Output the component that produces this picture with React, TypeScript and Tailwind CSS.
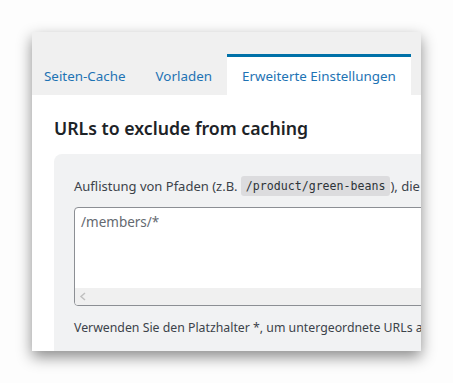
import React from "react";

export default function App() {
  const font = { fontFamily: '"Noto Sans", "Open Sans", sans-serif' };
  return (
    <div className="w-[453px] h-[383px] bg-[#fdfdfd] pt-[32px] pl-[32px]" style={font}>
      <div className="w-[389px] h-[319px] overflow-hidden bg-white shadow-[0_6px_14px_rgba(0,0,0,0.45)] flex flex-col">
        <div className="h-[63px] bg-[#f0f0f0] flex items-end shrink-0 whitespace-nowrap">
          <div className="h-[38px] pl-[12px] pr-[15px] flex items-center text-[13.4px] text-[#1e73b4] shrink-0">Seiten-Cache</div>
          <div className="h-[38px] px-[15px] flex items-center text-[13.4px] text-[#1e73b4] shrink-0">Vorladen</div>
          <div className="h-[41px] px-[15px] border-t-[3px] border-[#0071a8] bg-white flex items-center text-[13.4px] text-[#1e73b4] shrink-0">Erweiterte Einstellungen</div>
        </div>
        <div className="pl-[22px] flex-1 flex flex-col">
          <div className="pt-[22px] h-[59px] text-[17.7px] font-semibold text-[#1d2327] leading-[22px] whitespace-nowrap">URLs to exclude from caching</div>
          <div className="flex-1 bg-[#f1f2f3] rounded-tl-[8px] pl-[20px] pt-[22px] w-[400px]">
            <div className="text-[13px] text-[#3c434a] whitespace-nowrap h-[20px] leading-[20px] flex items-center">
              <span>Auflistung von Pfaden (z.B.&nbsp;</span>
              <span className="bg-[#dcdcde] rounded-[3px] px-[5px] text-[11.6px] leading-[20px] text-[#2c3338]" style={{ fontFamily: '"DejaVu Sans Mono", monospace' }}>/product/green-beans</span>
              <span>), die</span>
            </div>
            <div className="mt-[11px] w-[400px] h-[99px] bg-white border border-[#8c8f94] rounded-[4px] flex flex-col overflow-hidden">
              <div className="flex-1 px-[6px] pt-[4px] text-[13.5px] text-[#646970] leading-[20px]">/members/*</div>
              <div className="h-[17px] bg-[#f0f0f0] flex items-center pl-[4px] text-[#c4c4c4] text-[12px]">
                <svg width="8" height="9" viewBox="0 0 8 9"><path d="M6 1 L2 4.5 L6 8" stroke="#c0c0c0" strokeWidth="1.5" fill="none" /></svg>
              </div>
            </div>
            <div className="mt-[12px] text-[12.3px] text-[#3c434a] whitespace-nowrap leading-[20px]">Verwenden Sie den Platzhalter *, um untergeordnete URLs auszuschließen.</div>
          </div>
        </div>
      </div>
    </div>
  );
}
